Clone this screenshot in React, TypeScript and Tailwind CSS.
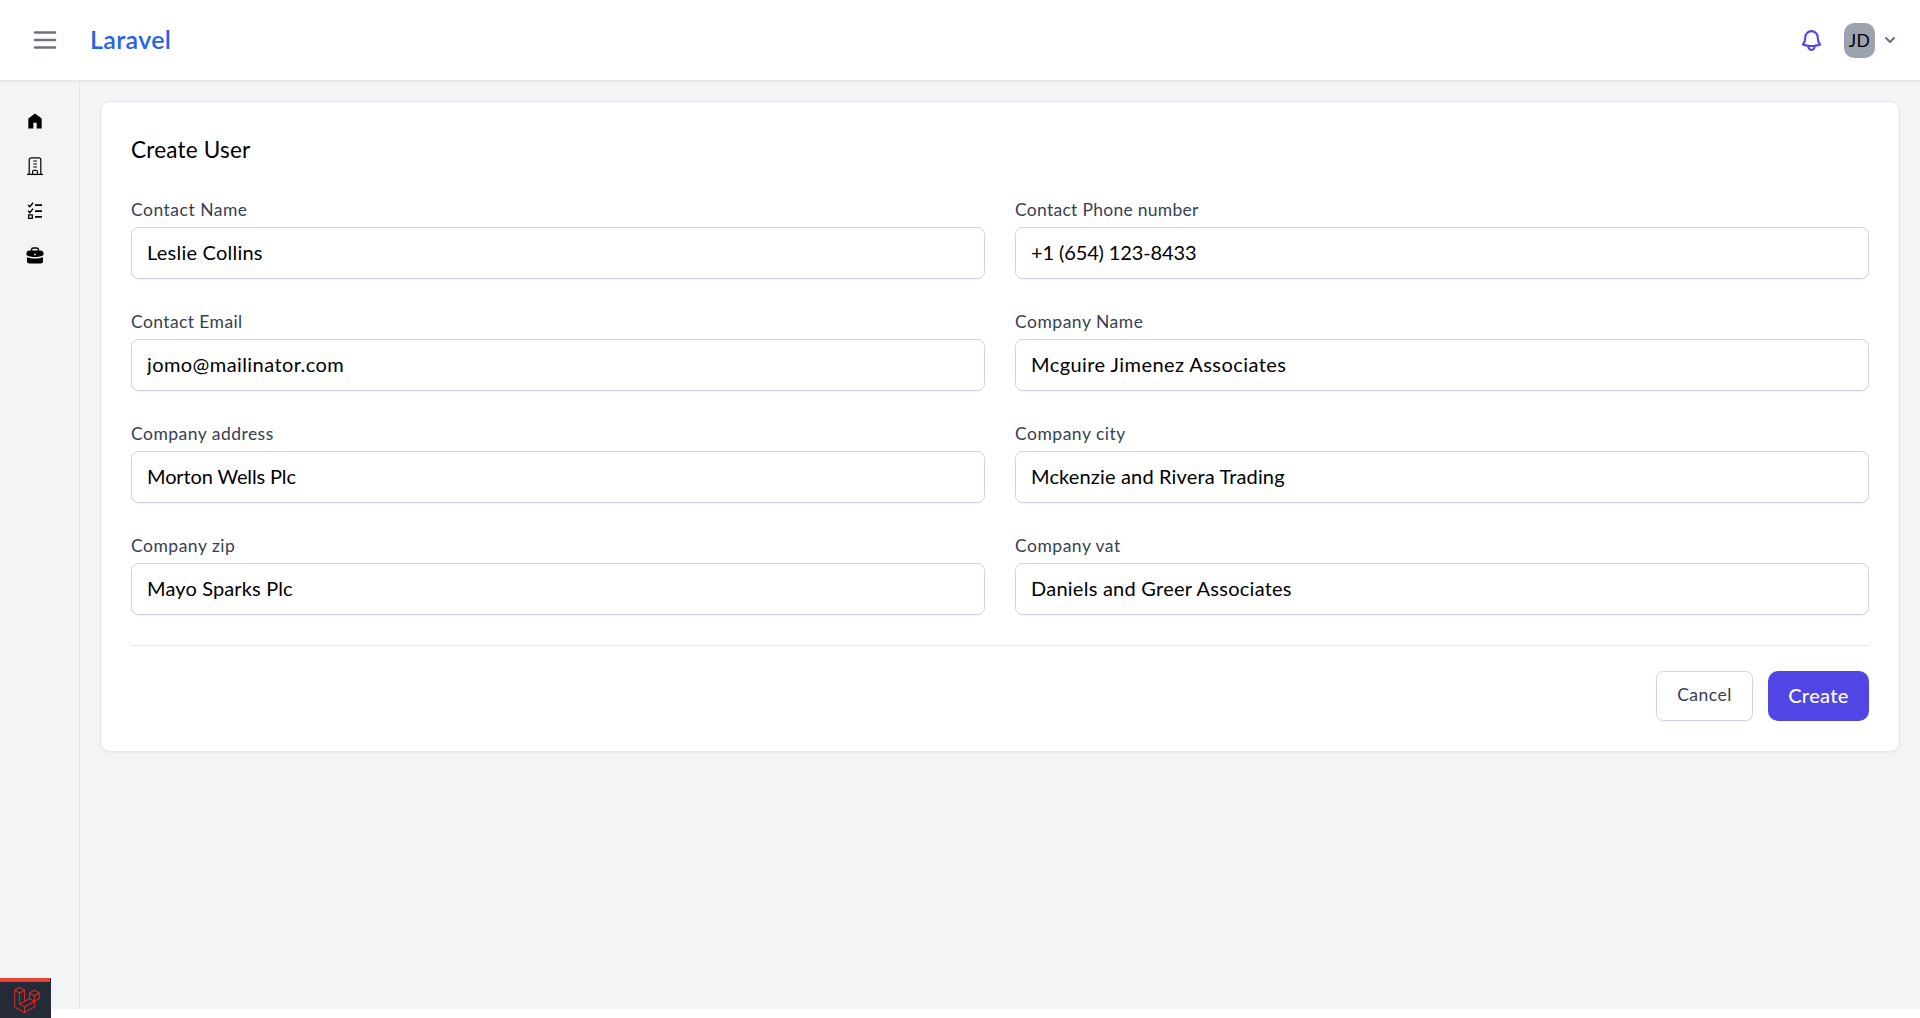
import type { FC, ReactNode } from 'react';
import { useState } from 'react';
import { SiLaravel } from 'react-icons/si';

type Field = {
  name: string;
  label: string;
  value: string;
  labelClass: string;
  inputClass: string;
};

const fields: Field[] = [
  {
    name: 'contact_name',
    label: 'Contact Name',
    value: 'Leslie Collins',
    labelClass: 'tracking-[0.5px]',
    inputClass: 'tracking-[0.23px]'
  },
  {
    name: 'contact_phone',
    label: 'Contact Phone number',
    value: '+1 (654) 123-8433',
    labelClass: 'tracking-[0.28px]',
    inputClass: 'tracking-[-0.12px]'
  },
  {
    name: 'contact_email',
    label: 'Contact Email',
    value: 'jomo@mailinator.com',
    labelClass: 'tracking-[0.4px]',
    inputClass: 'tracking-[0.42px]'
  },
  {
    name: 'company_name',
    label: 'Company Name',
    value: 'Mcguire Jimenez Associates',
    labelClass: 'tracking-[0.5px]',
    inputClass: 'tracking-[0.43px]'
  },
  {
    name: 'company_address',
    label: 'Company address',
    value: 'Morton Wells Plc',
    labelClass: 'tracking-[0.47px]',
    inputClass: 'tracking-[-0.13px]'
  },
  {
    name: 'company_city',
    label: 'Company city',
    value: 'Mckenzie and Rivera Trading',
    labelClass: 'tracking-[0.5px]',
    inputClass: 'tracking-[0.15px]'
  },
  {
    name: 'company_zip',
    label: 'Company zip',
    value: 'Mayo Sparks Plc',
    labelClass: 'tracking-[0.5px]',
    inputClass: 'tracking-[0.14px]'
  },
  {
    name: 'company_vat',
    label: 'Company vat',
    value: 'Daniels and Greer Associates',
    labelClass: 'tracking-[0.5px]',
    inputClass: 'tracking-[0.25px]'
  }
];

const HomeIcon: FC = () => (
  <svg className="h-5 w-5" viewBox="0 0 24 24" fill="currentColor">
    <path d="M4 21V9l8-6 8 6v12h-6v-7h-4v7z" />
  </svg>
);

const BuildingIcon: FC = () => (
  <svg className="h-5 w-5" viewBox="0 0 20 20" fill="none" stroke="currentColor">
    <path d="M2 18.4h16" strokeWidth="1.3" />
    <path d="M4.2 18V3.8a2 2 0 0 1 2-2h7.6a2 2 0 0 1 2 2V18" strokeWidth="1.2" />
    <path d="M8.3 5h3.6M8.3 8h3.6M8.3 11h3.6" strokeWidth="1.1" />
    <path d="M7.6 18v-2.4a1.2 1.2 0 0 1 1.2-1.2h2.4a1.2 1.2 0 0 1 1.2 1.2V18" strokeWidth="1.1" />
  </svg>
);

const ChecklistIcon: FC = () => (
  <svg className="h-5 w-5" viewBox="0 0 20 20" fill="none" stroke="currentColor">
    <path d="M10 4.200h7M10 10.100h7M10 15.900h7" strokeWidth="1.7" />
    <path d="m3 4 1.800 1.800 3.300-4M3 9.800l1.800 1.800 3.300-4" strokeWidth="1.4" />
    <path d="M3.700 13.800h3.600v3.600H3.700z" strokeWidth="1.3" />
  </svg>
);

const BriefcaseIcon: FC = () => (
  <svg className="h-5 w-5" viewBox="0 0 20 20" fill="currentColor">
    <path d="M6.6 5V3.6a1.6 1.6 0 0 1 1.6-1.6h3.6a1.6 1.6 0 0 1 1.6 1.6V5" fill="none" stroke="currentColor" strokeWidth="1.4" />
    <path
      fillRule="evenodd"
      d="M4.5 4.6h11a3 3 0 0 1 3 3v.9c0 1.300-3.400 2.500-8.500 2.500s-8.500-1.200-8.500-2.500v-.9a3 3 0 0 1 3-3zM9.200 7.800v1.400h1.600V7.800z"
    />
    <path d="M2 11.200c2 .9 4.800 1.300 8 1.300s6-.4 8-1.300v3.800a2.500 2.500 0 0 1-2.500 2.500h-11A2.500 2.500 0 0 1 2 15z" />
  </svg>
);

const navigation: { name: string; icon: ReactNode }[] = [
  { name: 'Home', icon: <HomeIcon /> },
  { name: 'Companies', icon: <BuildingIcon /> },
  { name: 'Tasks', icon: <ChecklistIcon /> },
  { name: 'Projects', icon: <BriefcaseIcon /> }
];

const Header: FC = () => (
  <header className="relative z-10 flex h-[81px] shrink-0 items-center justify-between border-b border-[#e5e7eb] bg-white pl-[30px] pr-5 shadow-xs">
    <div className="flex items-center">
      <button type="button" className="text-[#6b7280]" aria-label="Toggle sidebar">
        <svg className="h-[30px] w-[30px]" viewBox="0 0 24 24" fill="none" stroke="currentColor">
          <path strokeLinecap="round" strokeWidth="2" d="M4 6h16M4 12h16M4 18h16" />
        </svg>
      </button>
      <a href="#" className="ml-[30px] pb-0.5 text-[25px] font-semibold leading-[35px] tracking-[0.35px] text-[#2563eb]">
        Laravel
      </a>
    </div>
    <div className="flex items-center">
      <button type="button" className="text-[#4f46e5]" aria-label="Notifications">
        <svg className="h-[25px] w-[25px]" viewBox="0 0 24 24" fill="none" stroke="currentColor">
          <path
            strokeLinecap="round"
            strokeLinejoin="round"
            strokeWidth="2"
            d="M14.857 17.082a23.848 23.848 0 0 0 5.454-1.310A8.967 8.967 0 0 1 18 9.750V9A6 6 0 0 0 6 9v.750a8.967 8.967 0 0 1-2.312 6.022c1.733.640 3.560 1.085 5.455 1.310m5.714 0a24.255 24.255 0 0 1-5.714 0m5.714 0a3 3 0 1 1-5.714 0"
          />
        </svg>
      </button>
      <button type="button" className="ml-5 flex items-center gap-[5px]">
        <span className="flex h-[35px] w-[31px] items-center justify-center rounded-[10px] bg-[#9ca3af] pt-0.5 text-[17.5px] tracking-[0.3px] text-black">
          JD
        </span>
        <svg className="h-5 w-5 text-[#6b7280]" viewBox="0 0 20 20" fill="currentColor">
          <path
            fillRule="evenodd"
            clipRule="evenodd"
            d="M5.293 7.293a1 1 0 011.414 0L10 10.586l3.293-3.293a1 1 0 111.414 1.414l-4 4a1 1 0 01-1.414 0l-4-4a1 1 0 010-1.414z"
          />
        </svg>
      </button>
    </div>
  </header>
);

const Sidebar: FC = () => (
  <aside className="w-20 shrink-0 border-r border-[#e5e7eb] pl-[25px] pt-[30px]">
    <nav className="flex flex-col gap-[25px]">
      {navigation.map(({ name, icon }) => (
        <a key={name} href="#" aria-label={name} className="h-5 w-5 text-black">
          {icon}
        </a>
      ))}
    </nav>
  </aside>
);

const CreateUser: FC = () => {
  const [values, setValues] = useState<Record<string, string>>(
    Object.fromEntries(fields.map(({ name, value }) => [name, value]))
  );

  return (
    <form className="rounded-[10px] border border-[#e5e7eb] bg-white p-[30px] shadow-xs">
      <h1 className="text-[22.5px] leading-[35px] tracking-[0.22px] text-black">Create User</h1>
      <div className="mt-[30px] grid grid-cols-2 gap-[30px]">
        {fields.map(({ name, label, labelClass, inputClass }) => (
          <div key={name}>
            <label htmlFor={name} className={`block text-[17.5px] leading-[25px] text-[#374151] ${labelClass}`}>
              {label}
            </label>
            <input
              id={name}
              type="text"
              value={values[name]}
              onChange={(e) => setValues({ ...values, [name]: e.target.value })}
              className={`mt-[5px] block h-[52px] w-full rounded-[7.5px] border border-[#d1d5db] bg-white px-[15px] pb-0.5 text-[20px] text-black shadow-xs ${inputClass}`}
            />
          </div>
        ))}
      </div>
      <div className="mt-[30px] flex justify-end gap-[15px] border-t border-[#e5e7eb] pt-[25px]">
        <button
          type="button"
          className="h-[50px] w-[97px] rounded-[7.5px] border border-[#d1d5db] bg-white pb-0.5 text-[17.5px] tracking-[0.5px] text-[#374151] shadow-xs"
        >
          Cancel
        </button>
        <button
          type="button"
          className="h-[50px] w-[101px] rounded-[10px] bg-[#4f46e5] pb-0.5 text-[20px] font-medium tracking-[0.35px] text-white"
        >
          Create
        </button>
      </div>
    </form>
  );
};

const App: FC = () => (
  <div className="h-[1018px] overflow-hidden bg-white font-['Lato',sans-serif]">
    <div className="flex h-[1009px] flex-col bg-[#f3f4f6]">
      <Header />
      <div className="flex min-h-0 flex-1">
        <Sidebar />
        <main className="min-w-0 flex-1 p-5">
          <CreateUser />
        </main>
      </div>
    </div>
    <div className="fixed bottom-0 left-0 z-20 h-10 w-[51px] bg-[#252a37] text-[#ff2d20]">
      <div className="h-1 w-[50px] bg-[#eb4432]" />
      <SiLaravel className="ml-3.5 mt-[5px] h-[26px] w-[26px]" />
    </div>
  </div>
);

export default App;
